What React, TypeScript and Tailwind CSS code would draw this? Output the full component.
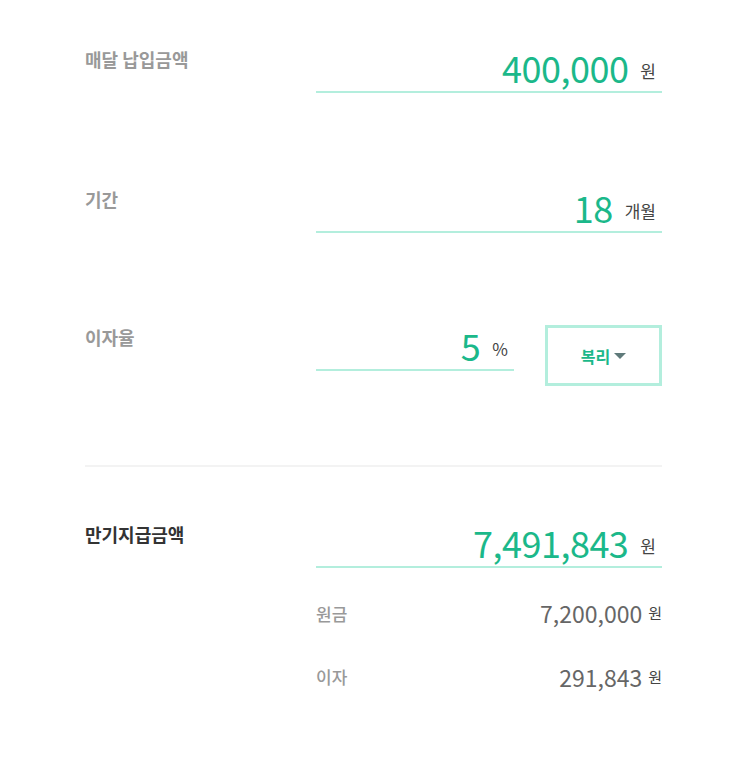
import React from "react";

const font = { fontFamily: '"Noto Sans CJK KR", "Noto Sans", sans-serif' };

function InputRow({ label, value, unit, extra, dark }: { label: string; value: string; unit: string; extra?: React.ReactNode; dark?: boolean }) {
  return (
    <div className="flex items-start">
      <div className={`w-[231px] pt-[1px] text-[18px] font-bold ${dark ? "text-[#333333]" : "text-[#999999]"}`}>{label}</div>
      <div className="flex flex-1 items-start gap-[31px]">
        <div className="flex flex-1 items-end justify-end border-b-2 border-[#b3eedd] pr-[6px] pb-[2px]">
          <span className="text-[36px] leading-[44px] text-[#1bb88a] tracking-[-0.5px]">{value}</span>
          <span className="ml-[12px] mb-[8px] text-[17px] leading-[20px] text-[#444444]">{unit}</span>
        </div>
        {extra}
      </div>
    </div>
  );
}

export default function App() {
  return (
    <div className="min-h-[757px] w-[743px] bg-white" style={font}>
      <div className="px-[85px] pt-[45px]">
        <div className="w-[577px]">
          <InputRow label="매달 납입금액" value="400,000" unit="원" />
          <div className="h-[92px]" />
          <InputRow label="기간" value="18" unit="개월" />
          <div className="h-[90px]" />
          <InputRow
            label="이자율"
            value="5"
            unit="%"
            extra={
              <div className="mt-[2px] flex h-[61px] w-[117px] items-center justify-center border-[3px] border-[#b3eedd]">
                <span className="text-[16px] font-bold text-[#1bb88a]">복리</span>
                <svg width="12" height="7" viewBox="0 0 12 7" className="ml-[4px] mt-[2px]">
                  <path d="M0 0 L12 0 L6 6 Z" fill="#5f7a7a" />
                </svg>
              </div>
            }
          />
          <div className="mt-[79px] h-[2px] bg-[#f3f3f3]" />
          <div className="mt-[53px]">
            <InputRow label="만기지급금액" value="7,491,843" unit="원" dark />
          </div>
          <div className="mt-[28px] flex items-center pl-[231px]">
            <span className="text-[17px] font-medium text-[#999999]">원금</span>
            <span className="ml-auto text-[23px] text-[#666666]">7,200,000</span>
            <span className="ml-[6px] text-[15px] text-[#444444]">원</span>
          </div>
          <div className="mt-[29px] flex items-center pl-[231px]">
            <span className="text-[17px] font-medium text-[#999999]">이자</span>
            <span className="ml-auto text-[23px] text-[#666666]">291,843</span>
            <span className="ml-[6px] text-[15px] text-[#444444]">원</span>
          </div>
        </div>
      </div>
    </div>
  );
}
